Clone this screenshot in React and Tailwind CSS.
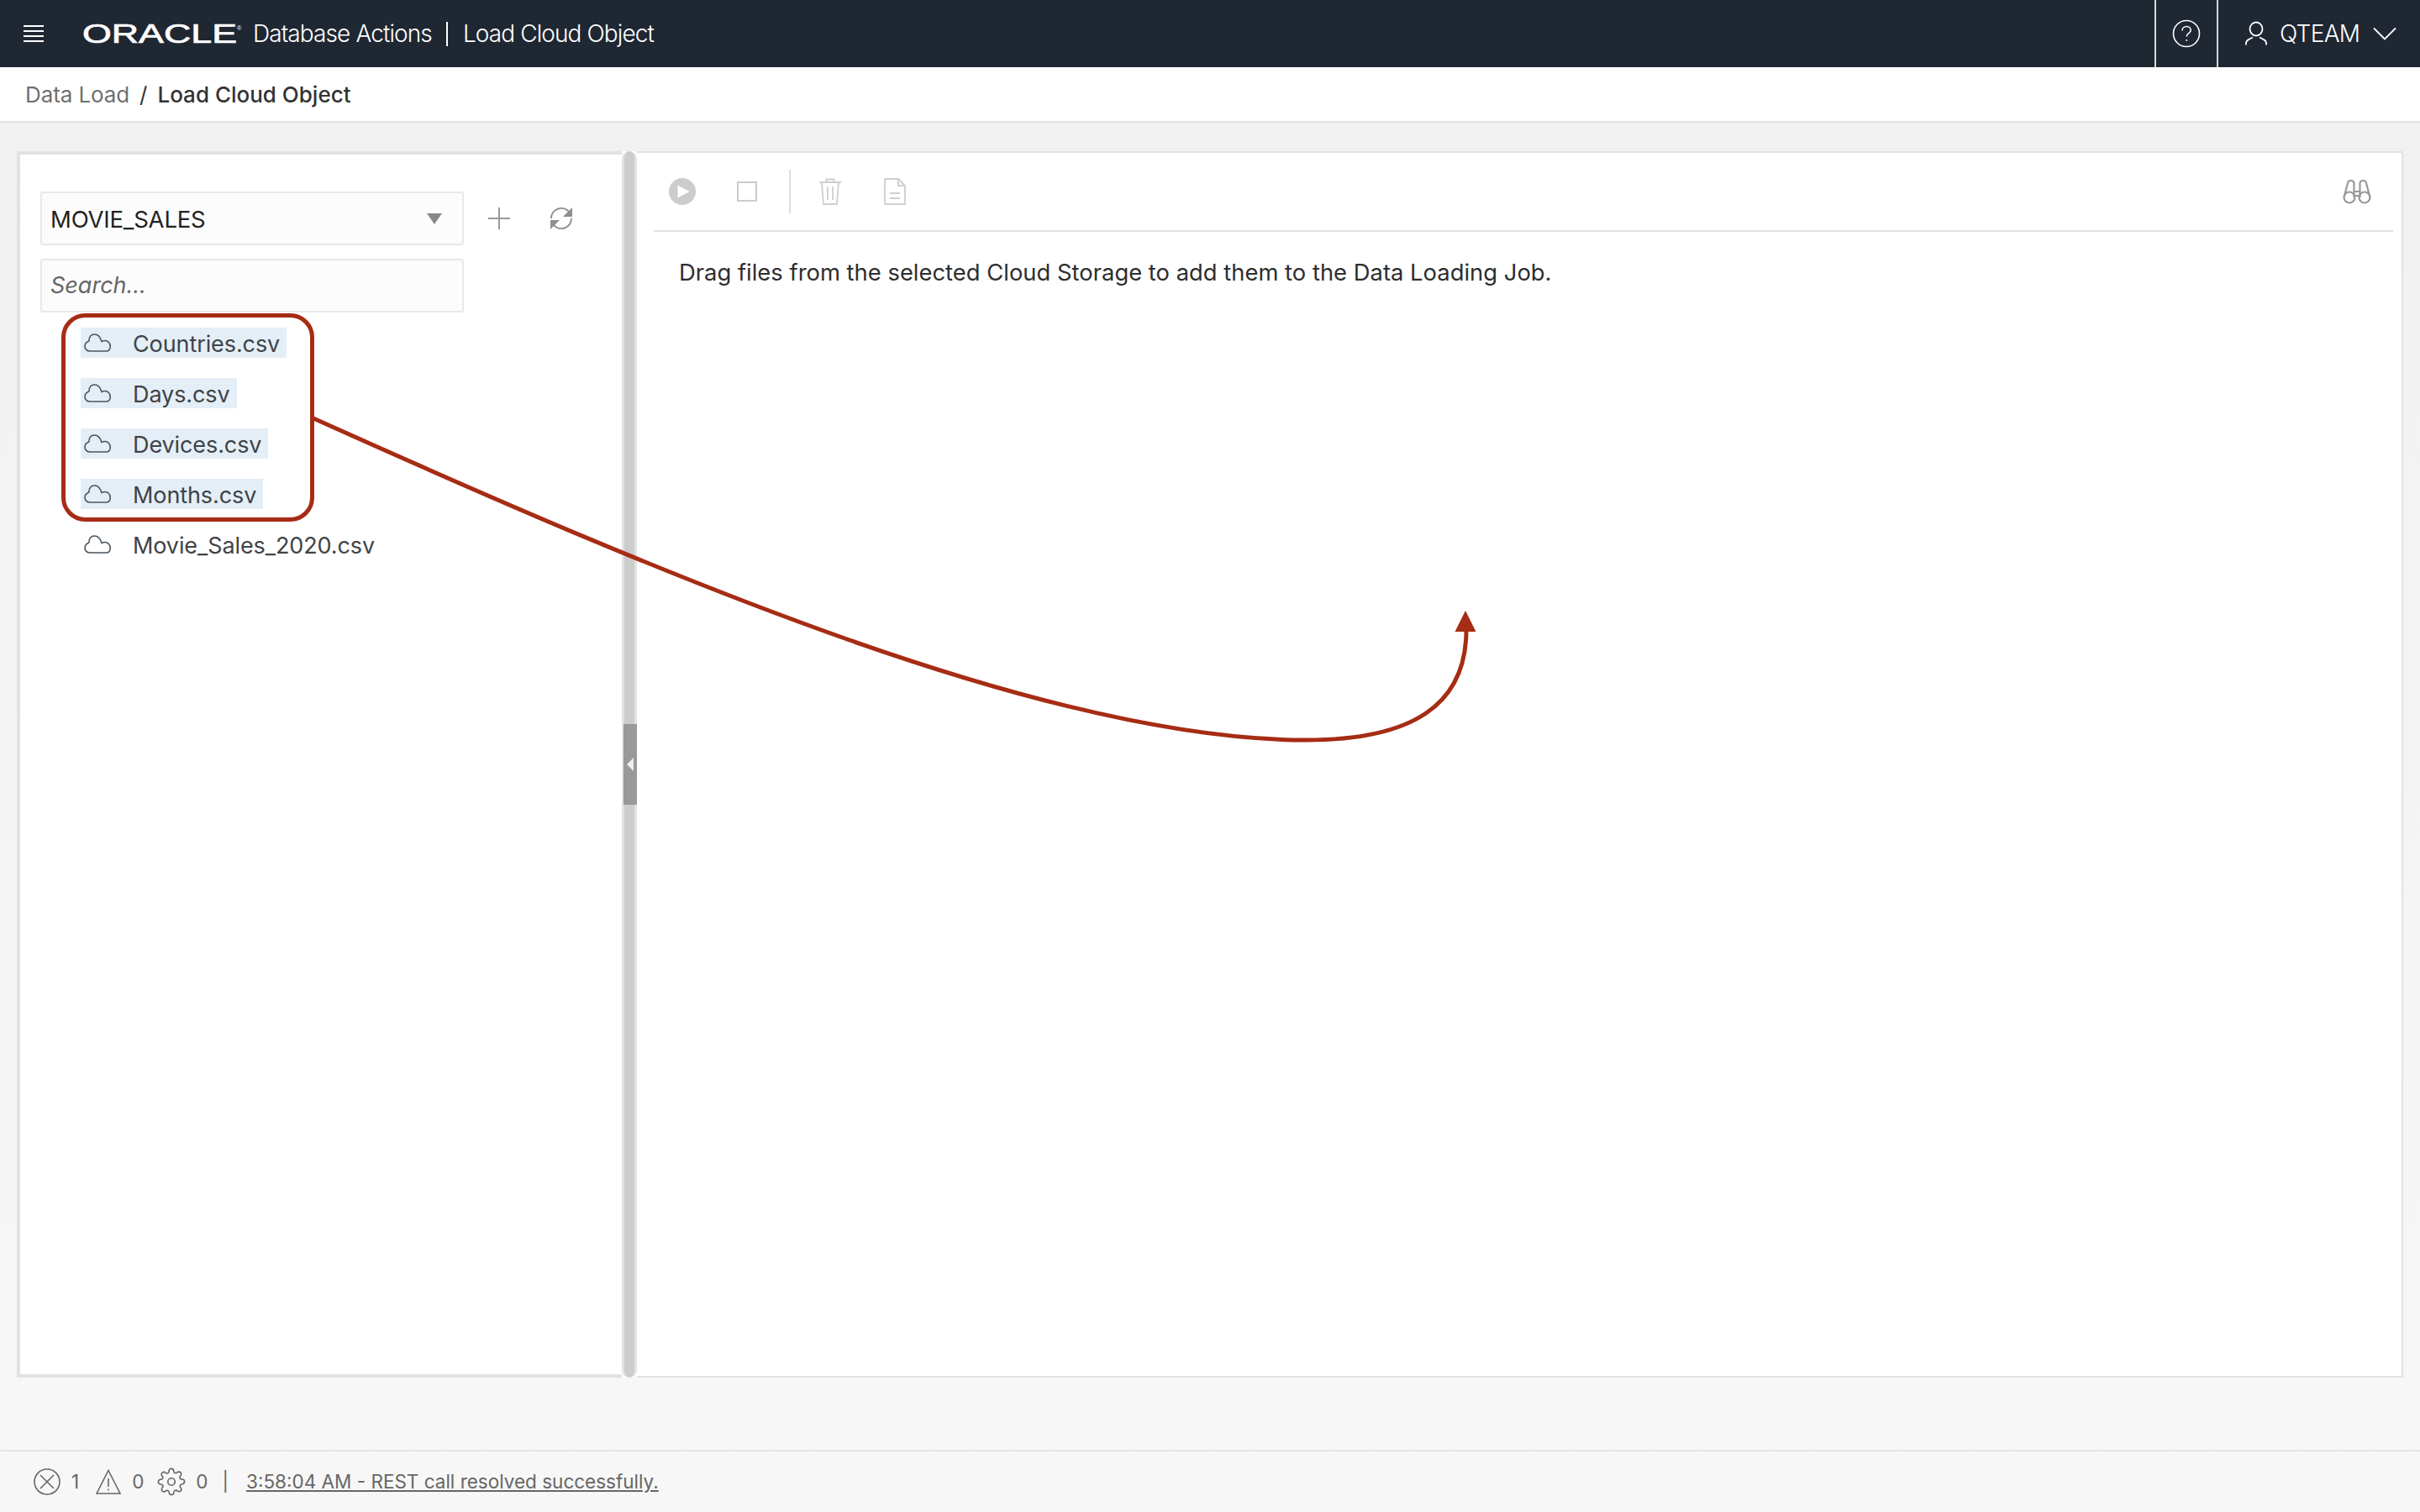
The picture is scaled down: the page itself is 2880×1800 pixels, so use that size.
const sans = "font-['Inter','Liberation_Sans',sans-serif]";

function Cloud() {
  return (
    <svg width="32" height="22" viewBox="0 0 32 22" fill="none" stroke="#4a5560" strokeWidth="1.6" className="shrink-0">
      <path d="M7 21H26C29.500 21 31.200 18.500 31.200 15.500C31.200 11.500 28.500 8.500 25 8.500C23.500 8.500 22 9 21 9.500C19.500 4.500 16.500 1 12.500 1C8.500 1 6 4 5.800 9C3 10 1 12.500 1 15.500C1 18.500 3.500 21 7 21Z" />
    </svg>
  );
}

function FileRow({ name, selected }) {
  return (
    <div className={`flex items-center h-9 w-fit pl-1 pr-2 ${selected ? "bg-[#e4eef7]" : ""}`}>
      <Cloud />
      <span className="ml-[26px] text-[27px] leading-9 text-[#3f4346] tracking-[-0.1px] relative top-[2px]">{name}</span>
    </div>
  );
}

function Arrow() {
  return (
    <svg className="absolute left-0 top-0 pointer-events-none" width="2880" height="1800" viewBox="0 0 2880 1800" fill="none">
      <rect x="75.500" y="375.500" width="296" height="243" rx="26" stroke="#a62c14" strokeWidth="5" />
      <path d="M373 498 C 800 690 1250 881 1554 881 C 1680 881 1745 840 1745 750" stroke="#a62c14" strokeWidth="5" />
      <path d="M1744 727 L1756.500 752 L1731.500 752 Z" fill="#a62c14" />
    </svg>
  );
}

export default function App() {
  return (
    <div className={`relative flex flex-col h-[1800px] w-[2880px] overflow-hidden bg-white ${sans}`}>
      <header className="flex items-center h-20 shrink-0 bg-[#1f2733] text-white">
        <svg width="24" height="22" viewBox="0 0 24 22" className="ml-[28px]" stroke="white" strokeWidth="2">
          <path d="M0 2h24M0 8h24M0 14h24M0 20h24" />
        </svg>
        <svg width="190" height="36" viewBox="0 0 190 36" className="ml-[46px] overflow-visible">
          <text x="0" y="29" fill="white" stroke="white" strokeWidth="0.7" fontFamily="Liberation Sans, sans-serif" fontSize="31" textLength="184" lengthAdjust="spacingAndGlyphs">ORACLE</text>
          <text x="184" y="14" fill="white" fontFamily="Liberation Sans, sans-serif" fontSize="7">®</text>
        </svg>
        <span className="ml-[13px] text-[28px] tracking-[-0.9px] font-light">Database Actions</span>
        <span className="ml-[17px] w-0.5 h-[29px] bg-white" />
        <span className="ml-[18px] text-[28px] tracking-[-0.9px] font-light">Load Cloud Object</span>
        <div className="ml-auto flex h-full">
          <div className="flex items-center justify-center w-[74px] border-l-2 border-[#d5d7da]">
            <svg width="34" height="34" viewBox="0 0 34 34" fill="none" stroke="white" strokeWidth="1.600">
              <circle cx="17" cy="17" r="15.500" />
              <path d="M12 13.500c0-3 2.300-5 5.200-5s5 2 5 4.500c0 3.700-5 3.700-5 7.500" />
              <circle cx="17.200" cy="25" r="1" fill="white" stroke="none" />
            </svg>
          </div>
          <div className="flex items-center w-[242px] border-l-2 border-[#d5d7da]">
            <svg width="26" height="30" viewBox="0 0 26 30" fill="none" stroke="white" strokeWidth="1.800" className="ml-[32px]">
              <ellipse cx="13" cy="9.500" rx="7.500" ry="8" />
              <path d="M1 28.500v-2c0-3 2-4 5-5.500l3-1.500M25 28.500v-2c0-3-2-4-5-5.500l-3-1.500" />
            </svg>
            <span className="ml-[15px] text-[28px] font-light tracking-[-0.7px]">QTEAM</span>
            <svg width="28" height="16" viewBox="0 0 28 16" fill="none" stroke="white" strokeWidth="1.800" className="ml-[16px]">
              <path d="M1 1.500l13 13 13-13" />
            </svg>
          </div>
        </div>
      </header>

      <div className="flex items-center h-[66px] shrink-0 pl-[30px] border-b-2 border-[#dfe3e8] bg-white text-[26px]">
        <span className="text-[#707070] tracking-[-0.1px]">Data Load</span>
        <span className="ml-[12px] mr-[12px] text-[#333]">/</span>
        <span className="font-medium text-[#333]">Load Cloud Object</span>
      </div>

      <main className="flex flex-1 pt-[34px] pl-5 pr-5 pb-[86px] bg-gradient-to-b from-[#f1f1f1] to-[#f7f7f7]">
        <section className="w-[720px] shrink-0 bg-white border-l-4 border-t-4 border-b-4 border-[#e2e2e2] pl-6 pt-11">
          <div className="flex items-center">
            <div className="flex items-center justify-between w-[504px] h-16 border-2 border-[#e8e8e8] rounded-[3px] bg-[#fcfcfc] pl-[10px] pr-6">
              <span className="text-[27.500px] text-[#222] tracking-[-0.2px] relative top-[2px]">MOVIE_SALES</span>
              <span className="w-0 h-0 border-x-[9.500px] border-x-transparent border-t-[13px] border-t-[#888]" />
            </div>
            <svg width="26" height="26" viewBox="0 0 26 26" stroke="#999" strokeWidth="2" className="ml-[29px]">
              <path d="M13 0v26M0 13h26" />
            </svg>
            <svg width="30" height="30" viewBox="0 0 30 30" fill="none" stroke="#8f8f8f" strokeWidth="2" className="ml-[46px]">
              <path d="M3 15A12 12 0 0 1 24 7M27 15A12 12 0 0 1 6 23" />
              <path d="M28 2v11h-11zM2 28v-11h11z" fill="#8f8f8f" stroke="none" />
            </svg>
          </div>
          <div className="flex items-center mt-4 w-[504px] h-16 border-2 border-[#e8e8e8] rounded-[3px] bg-[#fcfcfc] pl-[10px]">
            <span className="text-[27px] italic text-[#666]">Search...</span>
          </div>
          <div className="flex flex-col gap-6 mt-[18px] ml-12">
            <FileRow name="Countries.csv" selected />
            <FileRow name="Days.csv" selected />
            <FileRow name="Devices.csv" selected />
            <FileRow name="Months.csv" selected />
            <FileRow name="Movie_Sales_2020.csv" />
          </div>
        </section>

        <div className="relative w-[18px] shrink-0 bg-white">
          <div className="absolute inset-y-0 left-0 w-[18px] border-x-[3px] border-[#e2e2e2] bg-[#cccccc] rounded-full" />
          <div className="absolute left-[2px] top-[682px] w-4 h-24 bg-[#999] flex items-center justify-center">
            <span className="w-0 h-0 border-y-[8px] border-y-transparent border-r-[8px] border-r-[#eee]" />
          </div>
        </div>

        <section className="flex-1 bg-white border-2 border-l-0 border-[#e2e2e2] pl-5 pr-[10px]">
          <div className="flex items-center h-[94px] border-b-2 border-[#e2e2e2]">
            <svg width="32" height="32" viewBox="0 0 32 32" className="ml-[18px]">
              <circle cx="16" cy="16" r="16" fill="#cbcccd" />
              <path d="M10.500 8.500L24.500 16L10.500 23.500Z" fill="white" />
            </svg>
            <span className="ml-[49px] w-6 h-6 border-2 border-[#cbcccd]" />
            <span className="ml-[38px] w-0.5 h-[52px] bg-[#dedede]" />
            <svg width="28" height="32" viewBox="0 0 28 32" fill="none" stroke="#cfcfcf" strokeWidth="1.800" className="ml-[33px]">
              <path d="M1 5h26M9.500 5V1.500h9V5M4 5l2 26h16l2-26M11 10v16M17 10v16" />
            </svg>
            <svg width="26" height="32" viewBox="0 0 26 32" fill="none" stroke="#cfcfcf" strokeWidth="1.800" className="ml-[50px]">
              <path d="M1 1h16l8 8v22H1zM17 1v8h8M7 18h12M7 24h12" />
            </svg>
            <svg width="34" height="30" viewBox="0 0 34 30" fill="none" stroke="#999" strokeWidth="2.200" className="ml-auto mr-[26px]">
              <circle cx="8" cy="22" r="6.500" />
              <circle cx="26" cy="22" r="6.500" />
              <path d="M1.500 22L6 5c.5-4 7-4 7.500 0v17M32.500 22L28 5c-.5-4-7-4-7.500 0v17M13.500 15h7M13.500 20h7" />
            </svg>
          </div>
          <p className="mt-[30px] ml-[30px] text-[27.400px] leading-[36px] text-[#2e2e2e]">Drag files from the selected Cloud Storage to add them to the Data Loading Job.</p>
        </section>
      </main>

      <footer className="flex items-center h-[74px] shrink-0 border-t-2 border-[#e6e6e6] bg-[#f7f7f7] pl-10 text-[22.500px] text-[#666]">
        <svg width="32" height="32" viewBox="0 0 32 32" fill="none" stroke="#666" strokeWidth="1.600">
          <circle cx="16" cy="16" r="15" />
          <path d="M8 8l16 16M24 8L8 24" />
        </svg>
        <span className="ml-[13px]">1</span>
        <svg width="30" height="30" viewBox="0 0 30 30" fill="none" stroke="#666" strokeWidth="1.600" className="ml-[20px]">
          <path d="M15 1.500L29 29H1ZM15 11v10M15 23.500v2" />
        </svg>
        <span className="ml-[13px]">0</span>
        <svg width="34" height="34" viewBox="0 0 24 24" fill="none" stroke="#666" strokeWidth="1.150" className="ml-[16px]">
          <circle cx="12" cy="12" r="3" />
          <path d="M19.400 15a1.650 1.650 0 0 0 .33 1.820l.06.06a2 2 0 1 1-2.830 2.830l-.06-.06a1.650 1.650 0 0 0-2.820 1.170V21a2 2 0 0 1-4 0v-.09a1.650 1.650 0 0 0-2.820-1.170l-.06.06a2 2 0 1 1-2.830-2.830l.06-.06a1.650 1.650 0 0 0-1.170-2.820H3a2 2 0 0 1 0-4h.09a1.650 1.650 0 0 0 1.170-2.820l-.06-.06a2 2 0 1 1 2.830-2.830l.06.06a1.650 1.650 0 0 0 2.820-1.170V3a2 2 0 0 1 4 0v.09a1.650 1.650 0 0 0 2.820 1.170l.06-.06a2 2 0 1 1 2.830 2.830l-.06.06a1.650 1.650 0 0 0 1.170 2.820H21a2 2 0 0 1 0 4h-.09a1.650 1.650 0 0 0-1.510 1z" />
        </svg>
        <span className="ml-[12px]">0</span>
        <span className="ml-[17px]">|</span>
        <span className="ml-[21px] underline">3:58:04 AM - REST call resolved successfully.</span>
      </footer>

      <Arrow />
    </div>
  );
}
